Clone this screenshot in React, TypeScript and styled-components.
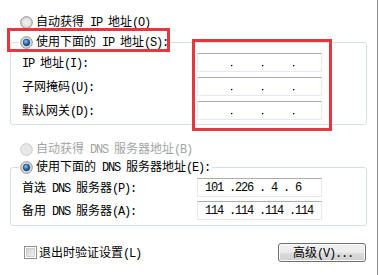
import React from "react";
import styled, { createGlobalStyle } from "styled-components";

const GlobalStyle = createGlobalStyle`
  html, body {
    margin: 0;
    padding: 0;
    background: #fff;
  }
  body {
    font-family: "Noto Sans CJK SC", sans-serif;
    font-size: 12px;
    color: #000;
  }
`;

const Page = styled.div`
  position: relative;
  box-sizing: border-box;
  width: 378px;
  height: 275px;
  padding-top: 14px;
  border-right: 1px solid #8d8d8d;
  overflow: hidden;
  background: #fff;
`;

const Latin = styled.span`
  font-family: "Liberation Mono", monospace;
  font-size: 12px;
  letter-spacing: -1.2px;
  white-space: pre;
`;

const Label = styled.span<{ $disabled?: boolean }>`
  display: inline-block;
  line-height: 16px;
  white-space: nowrap;
  color: ${(p) => (p.$disabled ? "#a3a3a3" : "#000")};
`;

const OptionRow = styled.div<{ $gap?: number }>`
  display: flex;
  align-items: center;
  gap: 3px;
  height: 16px;
  padding-left: 20px;
  margin-top: ${(p) => p.$gap ?? 0}px;
`;

const Group = styled.fieldset<{ $top: number; $bottom: number }>`
  box-sizing: border-box;
  width: 357px;
  margin: ${(p) => p.$top}px 0 0 10px;
  padding: 3px 8px ${(p) => p.$bottom}px 8px;
  border: 1px solid #d5dfe5;
  border-radius: 3px;
  min-inline-size: auto;
`;

const Legend = styled.legend`
  padding: 0 2px 0 1px;
  margin: 0;
  height: 16px;
`;

const LegendInner = styled.span`
  display: inline-flex;
  align-items: center;
  gap: 3px;
  height: 16px;
`;

const Fields = styled.div<{ $gap: number }>`
  display: grid;
  grid-template-columns: 178px 125px;
  row-gap: ${(p) => p.$gap}px;
  align-items: center;
`;

const FieldLabel = styled(Label)`
  padding-left: 3px;
`;

const IpBox = styled.div<{ $h: number }>`
  box-sizing: border-box;
  width: 125px;
  height: ${(p) => p.$h}px;
  border: 1px solid #e3e9ef;
  border-top-color: #abadb3;
  background: #fff;
  display: flex;
  align-items: center;
`;

const Dots = styled.div`
  display: flex;
  gap: 30px;
  padding-left: 33px;
  align-self: flex-end;
  margin-bottom: 5px;
`;

const Dot = styled.span`
  width: 1px;
  height: 1px;
  background: #000;
  box-shadow: 1px 0 0 #9a9a9a, 0 1px 0 #c4c4c4;
`;

const IpText = styled(Latin)`
  padding-left: 7px;
  line-height: 16px;
`;

const Footer = styled.div`
  display: flex;
  align-items: center;
  justify-content: space-between;
  margin-top: 17px;
  padding: 0 11px 0 24px;
`;

const CheckRow = styled.div`
  display: flex;
  align-items: center;
  gap: 2px;
`;

const Button = styled.div`
  box-sizing: border-box;
  width: 88px;
  height: 19px;
  border: 1px solid #707070;
  border-radius: 3px;
  background: linear-gradient(#f2f2f2 0%, #ebebeb 50%, #dddddd 50%, #cfcfcf 100%);
  box-shadow: inset 0 0 0 1px #fbfbfb;
  display: flex;
  align-items: center;
  justify-content: center;
  padding-left: 2px;
`;

const Mark = styled.div<{ $x: number; $y: number; $w: number; $h: number }>`
  position: absolute;
  left: ${(p) => p.$x}px;
  top: ${(p) => p.$y}px;
  width: ${(p) => p.$w}px;
  height: ${(p) => p.$h}px;
  box-sizing: border-box;
  border: 3px solid #e8363e;
  pointer-events: none;
`;

// split text into CJK and ascii runs so ascii gets the half-width font
const Mixed = ({ text }: { text: string }) => (
  <>
    {text.split(/([\x20-\x7e]+)/).map((part, i) =>
      /^[\x20-\x7e]+$/.test(part) ? <Latin key={i}>{part}</Latin> : part
    )}
  </>
);

const Radio = ({ checked, disabled }: { checked?: boolean; disabled?: boolean }) => (
  <svg width="13" height="13" viewBox="0 0 13 13">
    <defs>
      <radialGradient id="rOuter" cx="0.5" cy="0.5" r="0.6">
        <stop offset="0" stopColor="#f4f4f4" />
        <stop offset="1" stopColor="#d2d2d2" />
      </radialGradient>
      <radialGradient id="rDot" cx="0.4" cy="0.35" r="0.7">
        <stop offset="0" stopColor="#8cc7ee" />
        <stop offset="0.55" stopColor="#2a6aa4" />
        <stop offset="1" stopColor="#123d66" />
      </radialGradient>
    </defs>
    <circle
      cx="6.5"
      cy="6.5"
      r="5.8"
      fill={disabled ? "#e8e8e8" : "url(#rOuter)"}
      stroke={disabled ? "#c8c8c8" : "#8f8f8f"}
      strokeWidth="1"
    />
    {checked && <circle cx="6.5" cy="6.5" r="3.4" fill="url(#rDot)" stroke="#1b4a78" strokeWidth="0.6" />}
  </svg>
);

const Checkbox = () => (
  <svg width="13" height="13" viewBox="0 0 13 13">
    <defs>
      <linearGradient id="cb" x1="0" y1="0" x2="1" y2="1">
        <stop offset="0" stopColor="#cfcfcf" />
        <stop offset="1" stopColor="#f2f2f2" />
      </linearGradient>
    </defs>
    <rect x="0.5" y="0.5" width="12" height="12" fill="#fff" stroke="#8f8f8f" />
    <rect x="2.5" y="2.5" width="8" height="8" fill="url(#cb)" stroke="#b9b9b9" strokeWidth="0.6" />
  </svg>
);

const IpField = ({ value, h }: { value?: string; h: number }) => (
  <IpBox $h={h}>
    {value ? (
      <IpText>{value}</IpText>
    ) : (
      <Dots>
        <Dot />
        <Dot />
        <Dot />
      </Dots>
    )}
  </IpBox>
);

const ipRows = ["IP 地址(I):", "子网掩码(U):", "默认网关(D):"];
const dnsRows = [
  { label: "首选 DNS 服务器(P):", value: "101 .226 . 4 . 6" },
  { label: "备用 DNS 服务器(A):", value: "114 .114 .114 .114" },
];

export default function App() {
  return (
    <Page>
      <GlobalStyle />
      <OptionRow>
        <Radio />
        <Label>
          <Mixed text="自动获得 IP 地址(O)" />
        </Label>
      </OptionRow>
      <Group $top={4} $bottom={4}>
        <Legend>
          <LegendInner>
            <Radio checked />
            <Label>
              <Mixed text="使用下面的 IP 地址(S):" />
            </Label>
          </LegendInner>
        </Legend>
        <Fields $gap={5}>
          {ipRows.map((l) => (
            <React.Fragment key={l}>
              <FieldLabel>
                <Mixed text={l} />
              </FieldLabel>
              <IpField h={19} />
            </React.Fragment>
          ))}
        </Fields>
      </Group>

      <OptionRow $gap={16}>
        <Radio disabled />
        <Label $disabled>
          <Mixed text="自动获得 DNS 服务器地址(B)" />
        </Label>
      </OptionRow>
      <Group $top={2} $bottom={5}>
        <Legend>
          <LegendInner>
            <Radio checked />
            <Label>
              <Mixed text="使用下面的 DNS 服务器地址(E):" />
            </Label>
          </LegendInner>
        </Legend>
        <Fields $gap={4}>
          {dnsRows.map((r) => (
            <React.Fragment key={r.label}>
              <FieldLabel>
                <Mixed text={r.label} />
              </FieldLabel>
              <IpField h={19} value={r.value} />
            </React.Fragment>
          ))}
        </Fields>
      </Group>

      <Footer>
        <CheckRow>
          <Checkbox />
          <Label>
            <Mixed text="退出时验证设置(L)" />
          </Label>
        </CheckRow>
        <Button>
          <Label>
            <Mixed text="高级(V)..." />
          </Label>
        </Button>
      </Footer>

      <Mark $x={7} $y={28} $w={163} $h={24} />
      <Mark $x={192} $y={39} $w={140} $h={92} />
    </Page>
  );
}
